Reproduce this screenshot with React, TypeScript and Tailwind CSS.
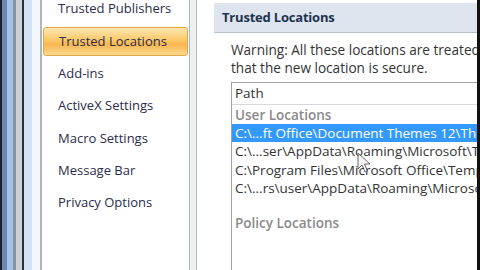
import { Fragment } from 'react';

const STRIPES: { w: number; c: string }[] = [
  { w: 2, c: 'bg-[#1a2233]' },
  { w: 5, c: 'bg-[#7089ad]' },
  { w: 6, c: 'bg-[#a3c2ea]' },
  { w: 3, c: 'bg-[#8c9299]' },
  { w: 6, c: 'bg-[#cdd1d6]' },
  { w: 2, c: 'bg-[#2e333b]' },
  { w: 8, c: 'bg-[#d3e3f4]' },
  { w: 8, c: 'bg-[#f3f6fa]' },
];

const MENU = [
  'Trusted Publishers',
  'Trusted Locations',
  'Add-ins',
  'ActiveX Settings',
  'Macro Settings',
  'Message Bar',
  'Privacy Options',
];

const PATHS = [
  'C:\\...ft Office\\Document Themes 12\\Theme Colors',
  'C:\\...ser\\AppData\\Roaming\\Microsoft\\Templates',
  'C:\\Program Files\\Microsoft Office\\Templates',
  'C:\\...rs\\user\\AppData\\Roaming\\Microsoft\\Word',
];

function Cursor() {
  return (
    <svg width="14" height="22" viewBox="0 0 14 22" className="absolute left-[357px] top-[152px] opacity-80">
      <path d="M1 1 L1 17 L5 13 L8 20 L10.5 19 L7.5 12 L13 12 Z" fill="#f4f4f4" stroke="#444" strokeWidth="1" strokeLinejoin="round" />
    </svg>
  );
}

export default function App() {
  return (
    <div className="relative w-[480px] h-[270px] flex overflow-hidden bg-white font-['Open_Sans',_'Noto_Sans',_sans-serif]">
      <div className="flex h-full shrink-0">
        {STRIPES.map((s, i) => (
          <div key={i} className={`h-full ${s.c}`} style={{ width: s.w }} />
        ))}
      </div>

      <div className="w-[150px] shrink-0 h-full border-l-2 border-r border-[#b0b5bb] bg-white">
        <div className="-mt-[7px] flex flex-col">
          {MENU.map((m, i) => (
            <Fragment key={m}>
              {i === 1 ? (
                <div className="h-[32.33px] py-[2px] pl-[1px] pr-[1px]">
                  <div className="h-full rounded-[3px] border border-[#e4a646] bg-[linear-gradient(to_bottom,#fde6b2_0%,#fbc96a_45%,#f8b650_60%,#fcd88e_100%)] flex items-center pl-[15px] text-[13px] text-[#2b2d4a]">
                    {m}
                  </div>
                </div>
              ) : (
                <div className="h-[32.33px] flex items-center pl-[16px] text-[13px] text-[#2b2d4a]">{m}</div>
              )}
            </Fragment>
          ))}
        </div>
      </div>

      <div className="w-[7px] shrink-0 h-full bg-[#eeeff1] border-r border-[#b5b9be]" />

      <div className="flex-1 min-w-0 h-full flex flex-col pt-[3px] pl-[17px] pr-[0px]">
        <div className="h-[30px] shrink-0 bg-[#dfe5ee] border-b border-[#b7bfca] flex items-center pl-[8px] text-[13px] font-bold text-[#1e3350] tracking-[-0.2px]">
          Trusted Locations
        </div>
        <div className="pl-[17px] pt-[8px] text-[13.6px] leading-[18px] text-[#333] whitespace-nowrap overflow-hidden">
          <div>Warning: All these locations are treated as trusted</div>
          <div>that the new location is secure.</div>
        </div>
        <div className="ml-[17px] mt-[5px] flex-1 border-l border-t border-[#a0a4aa] flex flex-col whitespace-nowrap overflow-hidden">
          <div className="h-[22px] shrink-0 border-b border-[#d5d8dc] flex items-center pl-[3px] text-[13.5px] text-[#333]">
            Path
          </div>
          <div className="h-[18px] shrink-0 mt-[1px] flex items-center pl-[3px] text-[13.5px] font-semibold text-[#8a8a8a]">
            User Locations
          </div>
          {PATHS.map((p, i) => (
            <div
              key={p}
              className={`h-[18.4px] shrink-0 flex items-center pl-[3px] text-[13.5px] ${i === 0 ? 'bg-[#3399ff] text-white' : 'text-[#333]'}`}
            >
              {p}
            </div>
          ))}
          <div className="h-[18px] shrink-0 mt-[17px] flex items-center pl-[3px] text-[13.5px] font-semibold text-[#8a8a8a]">
            Policy Locations
          </div>
        </div>
      </div>

      <div className="w-[3px] shrink-0 h-full bg-[#111]" />

      <Cursor />
    </div>
  );
}
